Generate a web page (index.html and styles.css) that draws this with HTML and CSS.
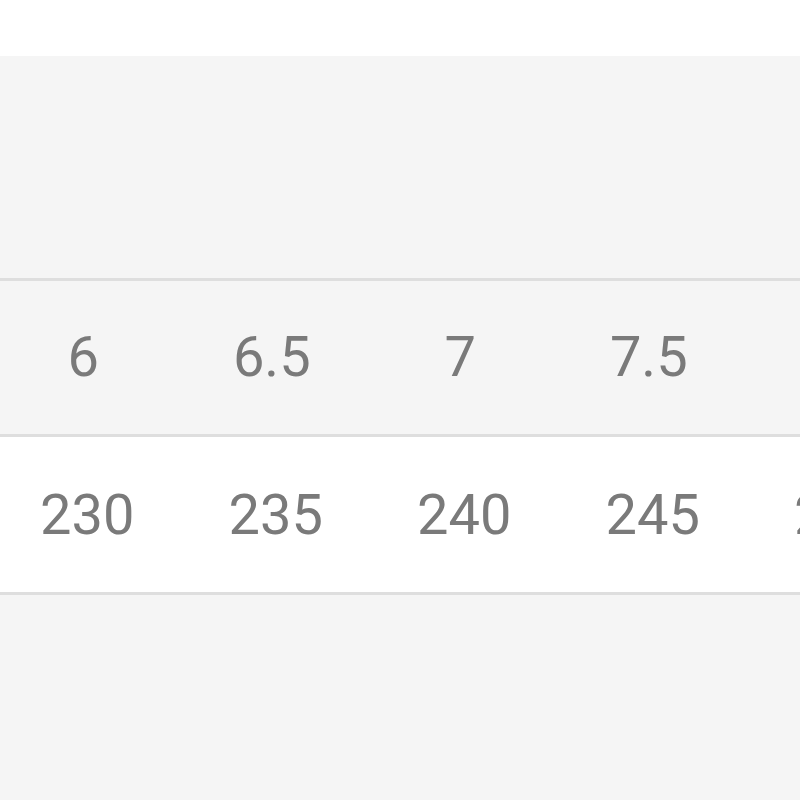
FILE: index.html
```html
<!DOCTYPE html>
<html>
<head>
<meta charset="utf-8">
<link rel="stylesheet" href="styles.css">
</head>
<body>
<div class="topbar"></div>
<div class="section">
  <div class="table">
    <div class="row head">
      <div class="cell">6</div>
      <div class="cell">6.5</div>
      <div class="cell">7</div>
      <div class="cell">7.5</div>
      <div class="cell">8</div>
    </div>
    <div class="row body">
      <div class="cell">230</div>
      <div class="cell">235</div>
      <div class="cell">240</div>
      <div class="cell">245</div>
      <div class="cell">250</div>
    </div>
  </div>
</div>
</body>
</html>
```

FILE: styles.css
```css
html, body {
  margin: 0;
  padding: 0;
  background: #f5f5f5;
  width: 800px;
  height: 800px;
  overflow: hidden;
  font-family: Roboto, "Noto Sans", sans-serif;
}
.topbar {
  height: 56px;
  background: #ffffff;
}
.section {
  padding-top: 222px;
  overflow: hidden;
}
.table {
  border-top: 3px solid #dedede;
  margin-left: -9px;
  width: 960px;
}
.row {
  display: grid;
  grid-template-columns: repeat(5, 188.5px);
  border-bottom: 3px solid #dedede;
}
.row.head {
  background: #f5f5f5;
  height: 153px;
}
.row.body {
  background: #ffffff;
  height: 155px;
}
.cell {
  display: flex;
  align-items: center;
  justify-content: center;
  font-size: 56px;
  color: #7a7a7a;
}
.row.head .cell {
  padding-bottom: 2px;
  padding-right: 4px;
}
.row.body .cell {
  padding-left: 4px;
}
```
